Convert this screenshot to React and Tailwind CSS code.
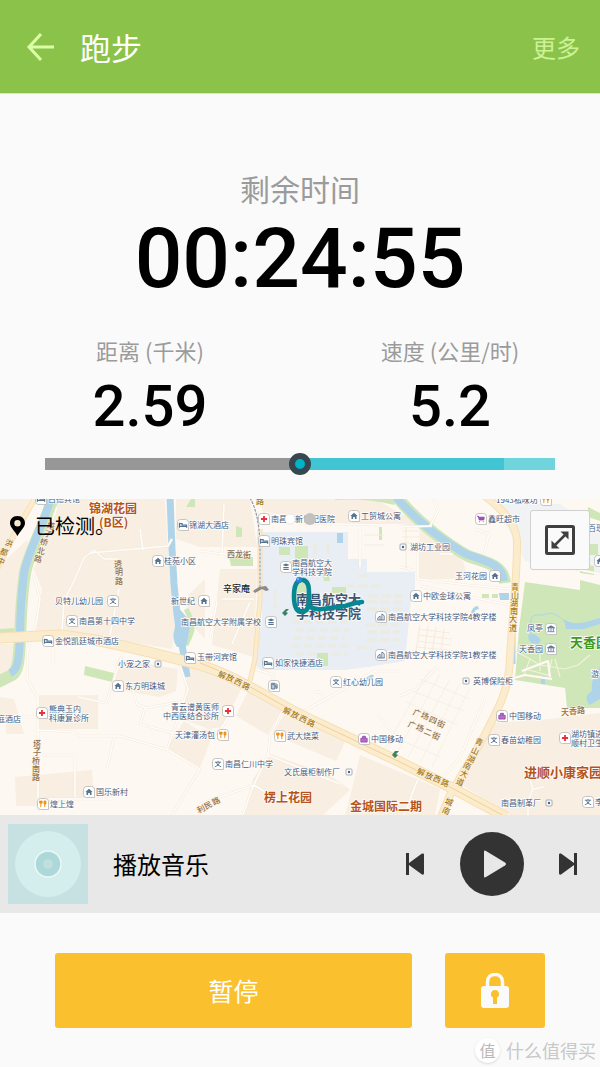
import React, { useState } from 'react';

const cjk = 'font-["Noto_Sans_CJK_SC",sans-serif]';

//地图上的兴趣点: 图标种类, 图标坐标, 文字坐标, 文字
const places = [
  ['bed', 41, 0, 48, 0, '百德宾馆'],
  ['bed', 183, 26, 189, 26, '锦湖大酒店'],
  ['home', 158, 62, 164, 62, '桂苑小区'],
  ['school', 113, 102, 55, 102, '贝特儿幼儿园'],
  ['home', 204, 102, 171, 102, '新世纪'],
  ['school', 72, 122, 79, 122, '南昌第十四中学'],
  ['college', 271, 123, 181, 123, '南昌航空大学附属学校'],
  ['bed', 48, 142, 55, 142, '金悦凯廷城市酒店'],
  ['bed', 190, 159, 197, 158, '玉带河宾馆'],
  ['cross', 264, 20, 271, 20, '南昌市新世纪医院'],
  ['home', 354, 17, 361, 17, '工贸城公寓'],
  ['bed', 264, 42, 271, 42, '明珠宾馆'],
  ['college', 286, 68, 292, 64, '南昌航空大', '学科技学院'],
  ['tower', 381, 118, 388, 118, '南昌航空大学科技学院4教学楼'],
  ['tower', 381, 156, 388, 156, '南昌航空大学科技学院1教学楼'],
  ['bed', 268, 164, 275, 164, '如家快捷酒店'],
  ['food', 546, 1, 496, 1, '1943私味坊'],
  ['cart', 481, 20, 488, 20, '鑫旺超市'],
  ['dot', 403, 48, 410, 48, '湖坊工业园'],
  ['home', 495, 77, 455, 77, '玉河花园'],
  ['home', 416, 97, 423, 97, '中欧金球公寓'],
  ['temple', 551, 130, 527, 129, '凤亭'],
  ['temple', 551, 150, 519, 150, '天香园'],
  ['dot', 158, 165, 118, 165, '小宠之家'],
  ['home', 118, 187, 125, 187, '东方明珠城'],
  ['cross', 42, 214, 49, 210, '熊典玉内', '科康复诊所'],
  ['none', 0, 0, -3, 220, '庭酒店'],
  ['none', 0, 0, 171, 208, '青云谱黄医师'],
  ['cross', 228, 212, 163, 217, '中西医结合诊所'],
  ['food', 223, 236, 175, 236, '天津灌汤包'],
  ['home', 89, 293, 96, 293, '国乐新村'],
  ['food', 43, 305, 50, 305, '煌上煌'],
  ['gas', 274, 187, 0, 0, ''],
  ['school', 336, 183, 343, 183, '红心幼儿园'],
  ['food', 280, 237, 287, 237, '武大烧菜'],
  ['bag', 364, 240, 371, 240, '中国移动'],
  ['school', 218, 265, 225, 265, '南昌仁川中学'],
  ['dot', 349, 273, 284, 273, '文氏展柜制作厂'],
  ['dot', 466, 182, 473, 182, '英博保险柜'],
  ['bag', 502, 217, 509, 217, '中国移动'],
  ['school', 494, 241, 501, 241, '春苗幼稚园'],
  ['cross', 565, 239, 571, 235, '湖坊镇进', '顺村卫生'],
  ['dot', 549, 304, 501, 304, '南昌制革厂'],
  ['school', 588, 303, 595, 303, '李'],
  ['none', 0, 0, 591, 175, '游'],
  ['none', 0, 0, 588, 29, '百现'],
  ['home', 600, 62, 0, 0, ''],
];

//道路名称: 每个字一个坐标
const roadNames = [
  ['洪都中', '#a3781c', 20, [[9, 44], [4, 53], [1, 62]]],
  ['塔子桥北路', '#8f7052', 12, [[51, 27], [48, 35], [44, 43], [41, 52], [38, 60]]],
  ['透明路', '#8f7052', 0, [[118, 65], [119, 73], [119, 82]]],
  ['路', '#a3781c', 0, [[260, 2]]],
  ['西龙街', '#8f7052', 0, [[231, 55], [239, 55], [247, 56]]],
  ['青山湖南大道', '#a3781c', 0, [[515, 88], [515, 96], [514, 104], [514, 112], [513, 120], [513, 129]]],
  ['青山湖南大道', '#a3781c', 24, [[479, 243], [475, 252], [471, 260], [467, 267], [464, 275], [460, 283]]],
  ['城南', '#a3781c', 24, [[449, 303], [446, 312]]],
  ['解放西路', '#a3781c', 24, [[222, 176], [230, 179], [238, 183], [246, 187]]],
  ['解放西路', '#a3781c', 24, [[287, 212], [295, 216], [303, 220], [311, 224]]],
  ['解放西路', '#a3781c', 22, [[421, 273], [429, 277], [437, 280], [445, 284]]],
  ['塔子桥南路', '#8f7052', 0, [[37, 245], [37, 253], [36, 262], [36, 270], [36, 278]]],
  ['广场四街', '#8f7052', 22, [[417, 214], [425, 217], [433, 221], [441, 225]]],
  ['广场二街', '#8f7052', 22, [[412, 226], [420, 229], [428, 233], [436, 237]]],
  ['天香路', '#8f7052', 0, [[565, 213], [573, 212], [581, 211]]],
  ['利民路', '#8f7052', -26, [[201, 310], [208, 306], [216, 302]]],
];

const estates = [
  [89, 10, 12, '#b5531c', '锦湖花园'],
  [99, 24, 12, '#b5531c', '(B区)'],
  [264, 299, 12, '#b5531c', '楞上花园'],
  [350, 308, 12, '#b5531c', '金城国际二期'],
  [524, 274, 13, '#b5531c', '进顺小康家园'],
  [570, 144, 13, '#3f9a1c', '天香园'],
  [296, 101, 13, '#3f5672', '南昌航空大'],
  [296, 115, 13, '#3f5672', '学科技学院'],
];

const lanes = [
  'M57 8 L50 28 M90 54 L168 47 L172 40 M62 132 L64 102 L74 82 L84 59 L94 51 L104 60 H117 V66 M119 90 L110 136 M140 30 L143 51 M33 75 L40 100 L36 125 L28 150 L27 180 L38 200 V312',
  'M38 231 L75 233 L80 237 L120 237 L168 251 L200 270 M114 238 L107 270 M42 256 H75 V298 M43 300 H110 M200 270 L172 316 M167 251 L188 190 L176 155 M78 198 L106 204 L122 156 M131 185 L137 205 L145 209 L185 202 M145 209 L140 225 L172 234',
  'M0 218 H38 M224 5 L222 55 L200 52 M222 55 H258 M262 14 L300 24 L380 26 M360 28 V68 M400 28 L432 27 M430 27 L439 10 L433 0 M418 56 V80 L468 86 L510 90 M420 87 L470 98 L510 106 M440 55 H453 M400 68 L418 72 M475 30 L489 35 L484 55',
  'M282 212 L270 238 L268 256 L252 290 L243 316 M200 305 L254 286 L280 302 M300 214 L333 196 L375 172 H400 M314 194 Q322 190 322 198 M268 256 L340 285 M230 215 L215 240 M398 240 L378 216 M418 280 L404 316 M438 285 L460 258 L485 200 M530 280 L533 290 L528 302 V316 M533 290 L544 288',
  'M210 140 L217 102 M232 145 L250 103 M222 100 H254 M255 170 L274 176 L268 192 M510 180 L525 176 L552 180 M522 172 L548 162 L550 178 M400 197 L416 190 L437 168 M555 66 L600 75 M53 135 V165',
];

const mainRoads = [
  ['M36 -3 L14 36 L-3 70', 6, 4],
  ['M260 30 L260 100 L255 160 L250 182', 5, 3],
  ['M-2 139 L60 136 C100 140 150 153 200 166 C240 178 280 208 320 225 L400 263 L450 288 L506 318', 11, 9],
  ['M481 -6 C505 12 516 25 517 42 C517 90 511 130 510 160 C509 190 500 207 483 239 L450 296 L441 318', 8, 6],
];

const Glyph = ({ kind }) => {
  switch (kind) {
    case 'home':
      return <path d="M-4 0 L0 -3.5 L4 0 H2.8 V3.2 H1 V1 H-1 V3.2 H-2.8 V0 Z" fill="#57748f" />;
    case 'bed':
      return <path d="M-4 -2.5 V3 M-4 1.6 H4 V3 M4 1.6 V0 H-1 V-1.5 H-4" stroke="#57748f" strokeWidth="1.3" fill="none" />;
    case 'school':
      return <path d="M0 -3.5 V-2 M-3.5 -2 H3.5 M-2 -2 Q-1 1.8 3.5 3.2 M2 -2 Q1 1.8 -3.5 3.2" stroke="#57748f" strokeWidth="1" fill="none" />;
    case 'college':
      return <path d="M-4 -2.2 L0 -3.8 L4 -2.2 L0 -.8 Z M-3 0 H3 V1 H-3 Z M-3 2 H3 V3.2 H-3 Z" fill="#57748f" />;
    case 'tower':
      return <path d="M-3.5 3.3 V1 L-1 -1 V3.3 M1 3.3 V-3.3 L3.5 -1.5 V3.3 M-4 3.3 H4" stroke="#57748f" strokeWidth="1" fill="none" />;
    case 'cross':
      return <path d="M0 -3.4 V3.4 M-3.4 0 H3.4" stroke="#ed2f37" strokeWidth="2" />;
    case 'food':
      return <path d="M-2.4 -3.5 V3.5 M-3.7 -3.5 V-1 H-1 V-3.5 M2 3.5 V-3 M3.2 -3.3 V0 H1.2 V-3.3 Z" stroke="#f29112" strokeWidth="1.1" fill="#f29112" />;
    case 'cart':
      return <path d="M-4 -3 H-2.8 L-2 1 H3 L3.6 -2 H-2.6 Z M-2 3 H-1 M2 3 H3" stroke="#9c4bb0" strokeWidth="1.1" fill="#9c4bb0" />;
    case 'bag':
      return <path d="M-3.5 -.8 H3.5 V3.4 H-3.5 Z M-1.6 -1 V-3 H1.6 V-1" stroke="#9c4bb0" strokeWidth="1" fill="#9c4bb0" fillOpacity=".8" />;
    case 'gas':
      return <path d="M-3 -3 H1 V3.3 H-3 Z M-2 -1.5 H0 M1 0 H2.2 V2.5 H3.5 V-1.5 L2 -3" stroke="#57748f" strokeWidth="1" fill="#57748f" fillOpacity=".4" />;
    case 'temple':
      return <path d="M-4 -1.3 L0 -3.5 L4 -1.3 Z M-2.6 -1 V2.5 M0 -1 V2.5 M2.6 -1 V2.5 M-4 3 H4" stroke="#57748f" strokeWidth=".9" fill="#57748f" />;
    default:
      return null;
  }
};

const Place = ({ place }) => {
  const [kind, ix, iy, tx, ty, ...lines] = place;
  return (
    <g>
      {kind === 'dot' && (
        <g transform={`translate(${ix} ${iy})`}>
          <rect x="-3" y="-3" width="6" height="6" rx="1" fill="#fff" stroke="#8d99a8" strokeWidth=".8" />
          <circle r="1.2" fill="#486581" />
        </g>
      )}
      {kind !== 'dot' && kind !== 'none' && (
        <g transform={`translate(${ix} ${iy})`}>
          <path d="M-2.500 -5.500 H2.500 Q5.500 -5.500 5.500 -2.500 V5.500 H-2.500 Q-5.500 5.500 -5.500 2.500 V-2.500 Q-5.500 -5.500 -2.500 -5.500 Z" fill="#fff" stroke="#b9b6b4" strokeWidth=".8" />
          <g transform="scale(.9)"><Glyph kind={kind} /></g>
        </g>
      )}
      {lines.map((line, i) => (
        <text key={i} x={tx} y={ty + 3 + i * 9} stroke="#fff" strokeWidth="1.4" paintOrder="stroke">{line}</text>
      ))}
    </g>
  );
};

const RunMap = () => (
  <svg viewBox="0 0 600 316" className={`block h-auto w-full ${cjk}`} fontSize="8" role="img" aria-label="跑步路线">
    <rect width="600" height="316" fill="#fdf9f2" />

    {/* 街区 */}
    <g fill="#f8eee2">
      <path d="M0 0 H30 L0 60 Z M58 0 H165 L168 52 L170 80 L178 112 L172 150 L112 140 L60 132 L36 132 L42 90 L34 70 L52 18 Z" />
      <path d="M0 66 L28 40 L20 132 L0 134 Z M176 0 H250 L257 48 H200 L176 40 Z M220 70 H257 L254 158 L212 146 Z M205 80 L188 96 L186 120 L205 140 Z" />
      <path d="M262 0 H375 L425 28 L400 25 H348 L300 20 L262 12 Z M420 28 L463 62 L468 80 H418 Z" />
      <path d="M118 160 L178 170 L176 192 L160 198 L113 190 Z M39 196 H98 V230 H39 Z M0 198 L14 200 L24 235 H6 V222 H0 Z M15 278 L92 271 L94 298 L38 307 H16 Z" />
      <path d="M0 145 H18 L16 175 L0 180 Z M188 165 L222 170 L244 185 L222 228 L200 232 L184 222 L166 250 L200 269 L214 232 L182 220 Z M248 192 L282 210 L268 236 L236 217 Z" />
      <path d="M285 214 L345 243 L336 262 L272 235 Z M270 255 L330 276 L350 291 L323 316 H243 L253 280 Z M360 256 L440 290 L435 316 H345 L352 290 Z" />
      <path d="M492 224 L550 220 L600 214 V316 H510 L462 286 Z" />
    </g>

    {/* 校园 */}
    <path d="M262 33 H348 V60 H367 V73 H415 V96 L411 102 L405 162 L368 168 L345 171 H262 L255 166 L262 120 Z" fill="#e9edf4" />
    <path d="M495 5 H560 L600 30 V75 L560 66 L525 62 Z" fill="#f1f2f4" />
    <g stroke="#ecebe0" strokeWidth="3" fill="none" strokeDasharray="10 3">
      <path d="M292 123 H350 M296 131 H350 M294 139 H345 M292 147 H350 M296 155 H348" strokeDasharray="8 4" />
      <path d="M345 87 H380 M368 97 H402 M367 103 H402 M367 110 H402 M365 126 H398 M367 133 H400 M367 141 H400 M357 149 H372 M358 77 H367 M315 45 V60 M328 45 V58 M275 90 V110" />
    </g>

    {/* 公园与绿地 */}
    <g fill="#cfe7b8">
      <path d="M525 83 L580 91 V81 L600 86 V209 H567 L565 189 L515 181 L519 130 Z" />
      <path d="M295 47 H308 V66 H295 Z M279 48 H290 V56 H279 Z M297 78 H306 V98 H297 Z M322 72 H328 L330 82 H324 Z M332 88 H346 V94 H332 Z M317 154 H328 V167 H317 Z M229 58 H253 V67 H231 Z M236 27 L242 29 V38 H236 Z M379 28 H382 V41 H379 Z M85 167 L114 174 L112 183 L84 176 Z" />
      <path d="M482 95 H489 V99 H482 Z M492 95 H498 V99 H492 Z M448 92 L462 94 V101 H450 Z M585 45 H598 V56 H585 Z M580 65 L594 67 V76 L580 74 Z M0 130 L14 129 V134 H0 Z M588 8 L600 14 V22 L588 18 Z M191 0 H195 V8 H186 Z" />
    </g>
    <g fill="#afd4ea">
      <path d="M337 34 H343 V44 H337 Z M499 94 H509 V101 H500 Z M471 115 Q472 107 478 107 L479 110 Q474 110 474 116 Z M528 136 Q530 134 536 136 Q544 141 538 145 Q528 146 528 136 Z" />
      <path d="M564 120 Q570 126 586 123 L600 119 V125 L584 130 H566 Z M600 168 Q590 180 592 192 Q582 198 590 206 L600 200 Z M541 177 H545 V185 H541 Z M366 176 L374 176 L372 181 L367 182 Z" />
    </g>
    <path d="M531 135 V120 Q532 115 542 116 L550 114 Q562 116 568 128" stroke="#afd4ea" strokeWidth="1" fill="none" />
    <path d="M515 152 L530 160 L540 166 L565 170 L578 166 L590 156 M540 150 V172 M525 170 L548 176 L552 160 M530 160 L524 176 M555 160 L560 178" stroke="#f2f3d6" strokeWidth="1.200" fill="none" />

    {/* 河流 */}
    <g fill="none">
      <g stroke="#cfe7b8" strokeWidth="12">
        <path d="M53 -2 C48 20 29 52 25 74 C21 100 21 120 20 138 C19 158 19 172 12 176 L-4 184" />
        <path d="M394 -6 C415 22 448 46 468 57 C488 64 503 66 505 84" />
      </g>
      <path d="M335 -2 Q365 -4 395 3" stroke="#cfe7b8" strokeWidth="6" />
      <path d="M186 110 Q193 122 192 131 Q190 138 186 146" stroke="#cfe7b8" strokeWidth="5" />
      <g stroke="#afd4ea" strokeWidth="8">
        <path d="M51 -2 C46 20 28 52 24 74 C21 100 20 120 20 138 C19 158 19 170 10 174" />
        <path d="M396 -2 C415 20 440 40 464 54 C486 63 502 64 504 82" />
        <path d="M170 -2 L172 50 L174 85 L177 115 L182 145 L187 178" strokeWidth="7" />
      </g>
      <path d="M174 106 Q189 116 190 129 L186 148 H177 Q171 140 175 128 Z" fill="#afd4ea" />
      <path d="M514 130 V165" stroke="#afd4ea" strokeWidth="3" />
    </g>

    {/* 小路 */}
    <g fill="none" strokeLinejoin="round">
      <g stroke="#f4e8da" strokeWidth="2.600">
        {lanes.map((d) => <path key={d} d={d} />)}
      </g>
      <g stroke="#fffdf9" strokeWidth="1.600">
        {lanes.map((d) => <path key={d} d={d} />)}
      </g>
      <path d="M418 130 L450 134 M418 136 L452 140 M417 142 L450 146 M417 148 L465 153 M420 126 L415 158 M428 127 L423 160 M436 128 L431 160 M444 130 L440 160 M402 32 H420 M402 38 H420 M402 44 H420 M406 28 V70 M364 36 H384 M364 46 H384" stroke="#f6ecdd" strokeWidth="1.200" />
      <path d="M430 170 L385 250 M440 175 L397 254 M450 180 L408 258 M460 184 L420 264 M470 188 L432 268 M420 180 L470 200 M412 192 L464 212 M406 203 L458 226 M398 240 L440 258" stroke="#f7f0e4" strokeWidth="1" />
    </g>

    {/* 主干道 */}
    <g fill="none">
      <g stroke="#f7dfb4">
        {mainRoads.map(([d, outer]) => <path key={d} d={d} strokeWidth={outer} />)}
      </g>
      <g stroke="#fcecce">
        {mainRoads.map(([d, , inner]) => <path key={d} d={d} strokeWidth={inner} />)}
      </g>
      <path d="M200 164 C240 178 280 208 320 225 L400 263 L450 288 L506 318" stroke="#f3cf97" strokeWidth="1" />
      <path d="M250 -1 Q259 14 260 46 V88" stroke="#fff" strokeWidth="2" />
      <path d="M250 -1 Q259 14 260 46 V88" stroke="#8f949c" strokeWidth="1.200" strokeDasharray="3 1" />
    </g>

    <g fill="#47597a">
      {places.map((place, i) => <Place key={i} place={place} />)}
    </g>

    <g textAnchor="middle" fontWeight="500" stroke="#fff6e4" strokeWidth="1" paintOrder="stroke">
      {roadNames.map(([name, color, angle, spots], i) => (
        <g key={i} fill={color}>
          {spots.map(([x, y], n) => (
            <text key={n} transform={`translate(${x} ${y}) rotate(${angle})`} y="3">{name[n]}</text>
          ))}
        </g>
      ))}
    </g>

    <g fontWeight="700" stroke="#fff" strokeWidth="1.500" paintOrder="stroke">
      {estates.map(([x, y, size, color, name]) => (
        <text key={name + y} x={x} y={y + 4} fontSize={size} fill={color}>{name}</text>
      ))}
    </g>
    <text x="223" y="93" fontSize="9" fontWeight="500" fill="#222" stroke="#fff" strokeWidth="1" paintOrder="stroke">辛家庵</text>
    <path d="M253 92 L259 88 L266 87 L269 91 L266 92 L262 90 L255 94 Z" fill="#8d8a88" />
    <path d="M282 114 L286 110 L289 110 L286 113 L288 114 L285 117 Z M392 256 L395 252 L399 252 L396 255 L398 256 L395 259 Z" fill="#3f8068" />

    {/* 跑步轨迹 */}
    <path d="M301 81 C295 82 294 89 294 97 C294 107 296 113 302 113 C309 112 309 106 309 97 C309 89 309 82 303 81 M309 107 Q314 111 322 110 L345 107 L355 104 L362 103" fill="none" stroke="#078791" strokeWidth="4.600" strokeLinecap="round" strokeLinejoin="round" />
    <circle cx="299" cy="81" r="3" fill="#2d80d4" />
    <circle cx="298" cy="80" r="1" fill="#8cc5f5" />
    <circle cx="290" cy="20" r="5" fill="#fff" stroke="#ddd" strokeWidth=".6" />
    <circle cx="310" cy="20" r="6" fill="#c1c1c1" />
  </svg>
);

const Metric = ({ label, value }) => (
  <div className="flex flex-1 flex-col items-center">
    <h2 className="text-[22px] leading-8 font-normal text-[#9b9b9b]">{label}</h2>
    <p className="font-[Roboto,sans-serif] text-[58px] leading-[80px] font-medium">{value}</p>
  </div>
);

//跑步页面
export default () => {

  const [pace, setPace] = useState(50);

  return (
    <div className={`flex min-h-screen flex-col bg-[#fafafa] text-black ${cjk}`}>
      <header className="flex h-[94px] items-center border-b border-[#d3e9ba] bg-[#8bc34a] pr-5 pl-6">
        <button type="button" aria-label="返回" className="text-[#dcffaa]">
          <svg width="32" height="32" viewBox="0 0 32 32" fill="none" stroke="currentColor" strokeWidth="3">
            <path d="M17 3 L5 16 L17 29 M5 16 H30" />
          </svg>
        </button>
        <h1 className="ml-6 text-[31px] leading-10 font-normal text-white">跑步</h1>
        <button type="button" className="ml-auto text-2xl font-normal text-[#cdf296]">更多</button>
      </header>

      <main className="flex flex-col">
        <section className="flex flex-col items-center pt-[74px]">
          <h2 className="text-[30px] leading-10 font-normal text-[#9b9b9b]">剩余时间</h2>
          <p className="font-[Roboto,sans-serif] text-[84px] leading-[102px] font-medium">00:24:55</p>
        </section>

        <section className="mt-6 flex">
          <Metric label="距离 (千米)" value="2.59" />
          <Metric label="速度 (公里/时)" value="5.2" />
        </section>

        <input
          type="range"
          aria-label="配速"
          value={pace}
          onChange={(e) => setPace(e.target.value)}
          className="mx-[45px] mt-3 mb-[29px] h-3 appearance-none bg-[linear-gradient(to_right,#979797_50%,#42c5d2_50%,#42c5d2_90%,#6fd4dc_90%)] [&::-webkit-slider-thumb]:size-[22px] [&::-webkit-slider-thumb]:appearance-none [&::-webkit-slider-thumb]:rounded-full [&::-webkit-slider-thumb]:border-[6px] [&::-webkit-slider-thumb]:border-[#37474f] [&::-webkit-slider-thumb]:bg-[#00b3c6]"
        />

        <section className="relative">
          <RunMap />
          <div className="absolute top-[11px] left-2 flex items-center gap-2">
            <svg width="19" height="22" viewBox="0 0 19 22">
              <path d="M9.500 1 C4.500 1 2 4.500 2 8 C2 12.500 7 16 9.500 21 C12 16 17 12.500 17 8 C17 4.500 14.500 1 9.500 1 Z M9.500 5 A3.200 3.200 0 1 1 9.500 11.400 A3.200 3.200 0 1 1 9.500 5 Z" fill="#000" fillRule="evenodd" />
            </svg>
            <span className="text-xl leading-8">已检测。</span>
          </div>
          <button type="button" aria-label="全屏地图" className="absolute top-[11px] right-[10px] flex h-[60px] w-[60px] items-center justify-center rounded-[3px] border border-[#d0d0d0] bg-[#fafafa]">
            <svg width="30" height="30" viewBox="0 0 30 30" fill="none" stroke="#3f3f3f">
              <rect x="1.500" y="1.500" width="27" height="27" rx="1" strokeWidth="3" />
              <path d="M9 21 L21 9" strokeWidth="2.500" />
              <path d="M15.500 6.500 H23.500 V14.500 Z M6.500 15.500 V23.500 H14.500 Z" fill="#3f3f3f" stroke="none" />
            </svg>
          </button>
        </section>

        <section className="flex h-[98px] items-center bg-[#e8e8e8] pr-5 pl-2">
          <svg width="80" height="80" viewBox="0 0 80 80">
            <rect width="80" height="80" fill="#c5e1e1" />
            <circle cx="40" cy="40" r="33" fill="#d4eded" />
            <circle cx="40" cy="40" r="13" fill="#add8d8" stroke="#eaf8f8" strokeWidth="1.500" />
            <circle cx="40" cy="40" r="5" fill="#c0dfdc" />
          </svg>
          <h2 className="ml-[25px] text-2xl font-normal">播放音乐</h2>
          <div className="ml-auto flex items-center gap-[34px]">
            <button type="button" aria-label="上一首">
              <svg width="22" height="24" viewBox="0 0 22 24" fill="#333">
                <path d="M2 1 H5 V11 L18 1.500 Q20 1 20 2.500 V21.500 Q20 23 18 22.500 L5 13 V23 H2 Z" />
              </svg>
            </button>
            <button type="button" aria-label="播放" className="flex size-16 items-center justify-center rounded-full bg-[#333]">
              <svg width="28" height="28" viewBox="0 0 28 28">
                <path d="M6 1.500 Q6 0 8 1 L27 12.500 Q29 14 27 15.500 L8 27 Q6 28 6 26.500 Z" fill="#e8e8e8" />
              </svg>
            </button>
            <button type="button" aria-label="下一首">
              <svg width="22" height="24" viewBox="0 0 22 24" fill="#333">
                <path d="M19 1 H16 V11 L3 1.500 Q1 1 1 2.500 V21.500 Q1 23 3 22.500 L16 13 V23 H19 Z" />
              </svg>
            </button>
          </div>
        </section>

        <section className="flex gap-[33px] px-[55px] pt-10">
          <button type="button" className="h-[75px] flex-1 rounded-[3px] bg-[#fbc02d] text-[25px] font-normal text-white">暂停</button>
          <button type="button" aria-label="锁定" className="flex h-[75px] w-[100px] items-center justify-center rounded-[3px] bg-[#fbc02d]">
            <svg width="28" height="35" viewBox="0 0 28 35">
              <path d="M6.500 15 V9 C6.500 4 10 1.500 14 1.500 C18 1.500 21.500 4 21.500 9 V15" fill="none" stroke="#fafafa" strokeWidth="3.500" />
              <rect y="13" width="28" height="22" rx="3" fill="#fafafa" />
              <path d="M14 17 A4 4 0 0 1 16 24.500 V31 H12 V24.500 A4 4 0 0 1 14 17 Z" fill="#fbc02d" />
            </svg>
          </button>
        </section>
      </main>

      <footer className="mt-auto flex items-center justify-end gap-[6px] pr-1 pb-[3px]">
        <span className="flex size-[25px] items-center justify-center rounded-full bg-white text-base text-[#b8b8b8] shadow-sm">值</span>
        <span className="text-lg leading-7 text-[#c8c8c8]">什么值得买</span>
      </footer>
    </div>
  );
}
